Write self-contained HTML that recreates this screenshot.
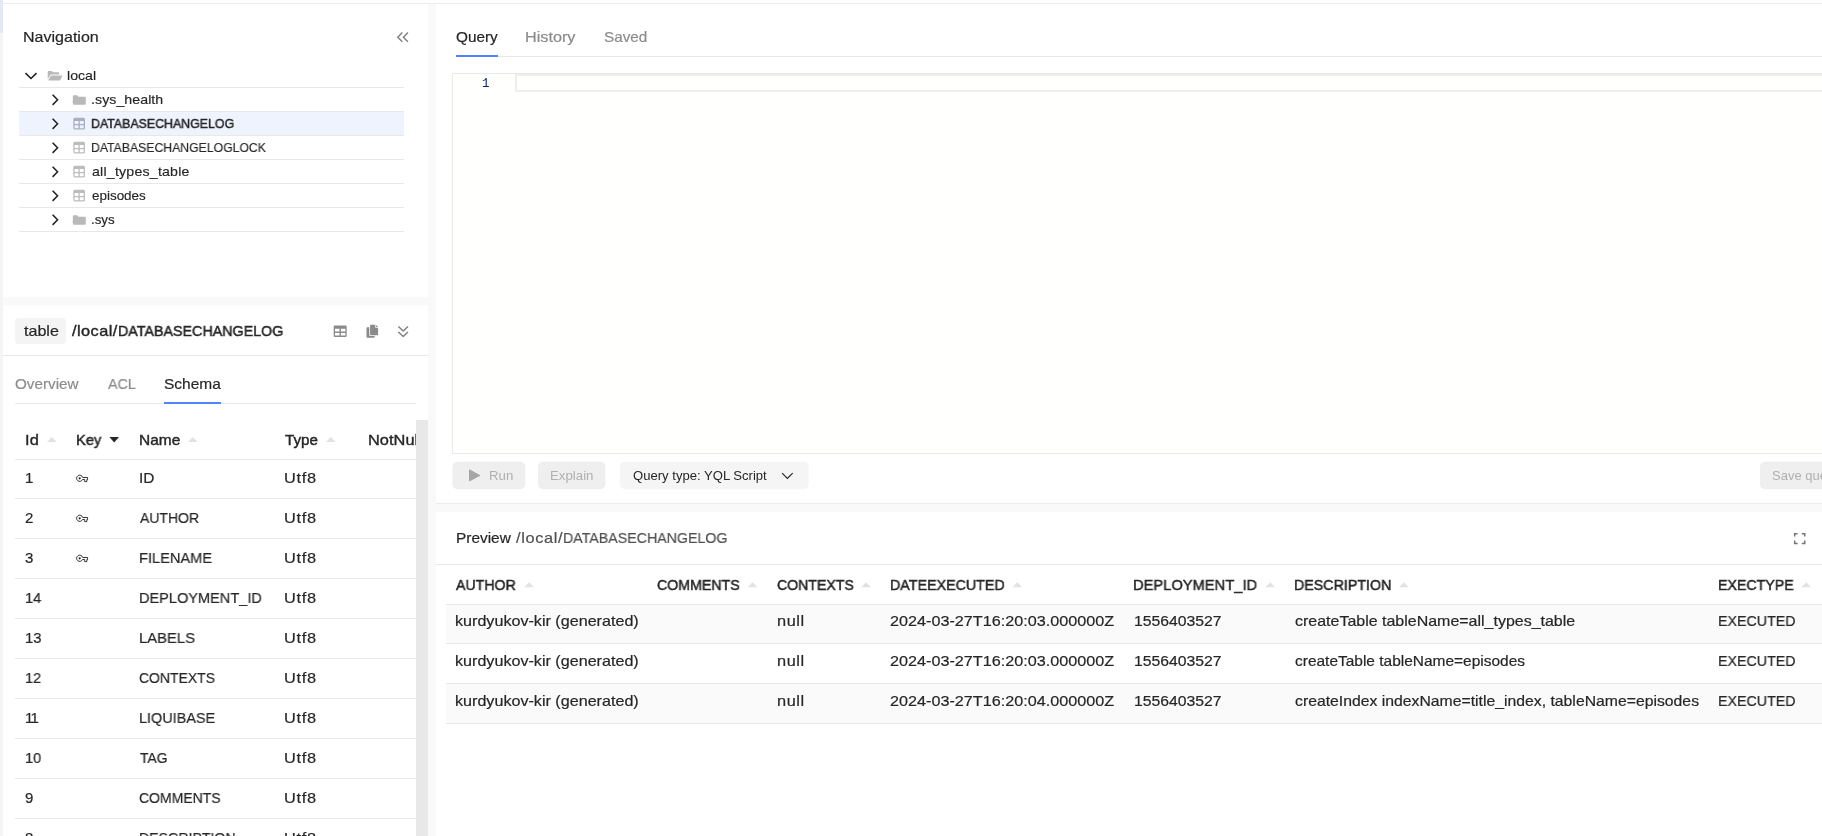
<!DOCTYPE html>
<html lang="en">
<head>
<meta charset="utf-8">
<title>YDB Embedded UI</title>
<style>
*{box-sizing:border-box;margin:0;padding:0}
html,body{width:1822px;height:836px;overflow:hidden;background:#fff}
body{position:relative;font-family:"Liberation Sans",sans-serif;font-size:13px;color:#262626}
.a{position:absolute}
.t{position:absolute;white-space:nowrap;line-height:1;color:#262626;transform-origin:0 0;will-change:transform}
svg{display:block;position:absolute;overflow:visible}
.hl{position:absolute;height:1px;background:#e8e8e8}
</style>
</head>
<body>
<div class="a" style="left:0;top:0;width:3px;height:33px;background:#e3e8f6"></div>
<div class="a" style="left:0;top:33px;width:3px;height:803px;background:#f4f4f4"></div>
<div class="hl" style="left:3px;top:3px;width:1819px;background:#ececec"></div>
<div class="a" style="left:428px;top:4px;width:8px;height:832px;background:#f9f9f9"></div>
<div class="a" style="left:3px;top:297px;width:425px;height:8px;background:#f9f9f9"></div>
<svg style="left:397px;top:32px" width="12" height="10" viewBox="0 0 12 10"><path d="M5.3 0.4L0.8 5.2L5.3 9.7M10.9 0.4L6.4 5.2L10.9 9.7" fill="none" stroke="#7f7f7f" stroke-width="1.4"/></svg>
<div class="a" style="left:19px;top:112px;width:385px;height:23px;background:#eff3fe"></div>
<div class="hl" style="left:19px;top:87px;width:385px"></div>
<div class="hl" style="left:19px;top:111px;width:385px"></div>
<div class="hl" style="left:19px;top:135px;width:385px"></div>
<div class="hl" style="left:19px;top:159px;width:385px"></div>
<div class="hl" style="left:19px;top:183px;width:385px"></div>
<div class="hl" style="left:19px;top:207px;width:385px"></div>
<div class="hl" style="left:19px;top:231px;width:385px"></div>
<svg style="left:25px;top:72px" width="12" height="7" viewBox="0 0 12 7"><g transform="translate(0.0 0.5)"><path d="M0.5 0.6L6 6L11.5 0.6" fill="none" stroke="#1f1f1f" stroke-width="1.5"/></g></svg>
<svg style="left:47px;top:70px" width="14.8" height="9.7" viewBox="0 0 14.8 9.7"><g transform="translate(0.7 0.9)"><path d="M0 1.1Q0 0 1.1 0H4L5.3 1.3H10.5Q11.6 1.3 11.6 2.4V3.6H3.7Q2.7 3.6 2.2 4.5L0 8.4Z" fill="#b9b9b9"/><path d="M3.9 4.6H14Q15 4.6 14.5 5.5L12.5 9Q12.1 9.7 11.3 9.7H1.2Q0.3 9.7 0.8 8.9L2.7 5.3Q3.1 4.6 3.9 4.6Z" fill="#b9b9b9"/></g></svg>
<svg style="left:52px;top:94px" width="7" height="12" viewBox="0 0 7 12"><g transform="translate(0.0 0.1)"><path d="M0.6 0.6 L5.6 5.7 L0.6 10.8" fill="none" stroke="#1f1f1f" stroke-width="1.5" stroke-linejoin="miter"/></g></svg>
<svg style="left:52px;top:118px" width="7" height="12" viewBox="0 0 7 12"><g transform="translate(0.0 0.1)"><path d="M0.6 0.6 L5.6 5.7 L0.6 10.8" fill="none" stroke="#1f1f1f" stroke-width="1.5" stroke-linejoin="miter"/></g></svg>
<svg style="left:52px;top:142px" width="7" height="12" viewBox="0 0 7 12"><g transform="translate(0.0 0.1)"><path d="M0.6 0.6 L5.6 5.7 L0.6 10.8" fill="none" stroke="#1f1f1f" stroke-width="1.5" stroke-linejoin="miter"/></g></svg>
<svg style="left:52px;top:166px" width="7" height="12" viewBox="0 0 7 12"><g transform="translate(0.0 0.1)"><path d="M0.6 0.6 L5.6 5.7 L0.6 10.8" fill="none" stroke="#1f1f1f" stroke-width="1.5" stroke-linejoin="miter"/></g></svg>
<svg style="left:52px;top:190px" width="7" height="12" viewBox="0 0 7 12"><g transform="translate(0.0 0.1)"><path d="M0.6 0.6 L5.6 5.7 L0.6 10.8" fill="none" stroke="#1f1f1f" stroke-width="1.5" stroke-linejoin="miter"/></g></svg>
<svg style="left:52px;top:214px" width="7" height="12" viewBox="0 0 7 12"><g transform="translate(0.0 0.1)"><path d="M0.6 0.6 L5.6 5.7 L0.6 10.8" fill="none" stroke="#1f1f1f" stroke-width="1.5" stroke-linejoin="miter"/></g></svg>
<svg style="left:72px;top:95px" width="13" height="10" viewBox="0 0 13 9.6"><g transform="translate(0.8 0.0)"><path d="M0 1.2Q0 0 1.2 0H4.3L5.7 1.5H11.8Q13 1.5 13 2.7V8.4Q13 9.6 11.8 9.6H1.2Q0 9.6 0 8.4Z" fill="#b9b9b9"/></g></svg>
<svg style="left:72px;top:215px" width="13" height="10" viewBox="0 0 13 9.6"><g transform="translate(0.8 0.0)"><path d="M0 1.2Q0 0 1.2 0H4.3L5.7 1.5H11.8Q13 1.5 13 2.7V8.4Q13 9.6 11.8 9.6H1.2Q0 9.6 0 8.4Z" fill="#b9b9b9"/></g></svg>
<svg style="left:73px;top:117px" width="11.7" height="11.7" viewBox="0 0 11.7 11.7"><g transform="translate(0.3 0.8)"><path fill-rule="evenodd" fill="#a9aec2" d="M1.6 0H10.1Q11.7 0 11.7 1.6V10.1Q11.7 11.7 10.1 11.7H1.6Q0 11.7 0 10.1V1.6Q0 0 1.6 0ZM1.3 3.1V6.2H5.2V3.1ZM6.5 3.1V6.2H10.4V3.1ZM1.3 7.4V10.4H5.2V7.4ZM6.5 7.4V10.4H10.4V7.4Z"/></g></svg>
<svg style="left:73px;top:141px" width="11.7" height="11.7" viewBox="0 0 11.7 11.7"><g transform="translate(0.3 0.8)"><path fill-rule="evenodd" fill="#bcbcbc" d="M1.6 0H10.1Q11.7 0 11.7 1.6V10.1Q11.7 11.7 10.1 11.7H1.6Q0 11.7 0 10.1V1.6Q0 0 1.6 0ZM1.3 3.1V6.2H5.2V3.1ZM6.5 3.1V6.2H10.4V3.1ZM1.3 7.4V10.4H5.2V7.4ZM6.5 7.4V10.4H10.4V7.4Z"/></g></svg>
<svg style="left:73px;top:165px" width="11.7" height="11.7" viewBox="0 0 11.7 11.7"><g transform="translate(0.3 0.8)"><path fill-rule="evenodd" fill="#bcbcbc" d="M1.6 0H10.1Q11.7 0 11.7 1.6V10.1Q11.7 11.7 10.1 11.7H1.6Q0 11.7 0 10.1V1.6Q0 0 1.6 0ZM1.3 3.1V6.2H5.2V3.1ZM6.5 3.1V6.2H10.4V3.1ZM1.3 7.4V10.4H5.2V7.4ZM6.5 7.4V10.4H10.4V7.4Z"/></g></svg>
<svg style="left:73px;top:189px" width="11.7" height="11.7" viewBox="0 0 11.7 11.7"><g transform="translate(0.3 0.8)"><path fill-rule="evenodd" fill="#bcbcbc" d="M1.6 0H10.1Q11.7 0 11.7 1.6V10.1Q11.7 11.7 10.1 11.7H1.6Q0 11.7 0 10.1V1.6Q0 0 1.6 0ZM1.3 3.1V6.2H5.2V3.1ZM6.5 3.1V6.2H10.4V3.1ZM1.3 7.4V10.4H5.2V7.4ZM6.5 7.4V10.4H10.4V7.4Z"/></g></svg>
<div class="a" style="left:15px;top:318px;width:51px;height:26px;border-radius:4px;background:#f4f4f4"></div>
<div class="hl" style="left:3px;top:355px;width:425px"></div>
<svg style="left:333px;top:325px" width="13" height="11.6" viewBox="0 0 13 11.6"><g transform="translate(0.7 0.4)"><path fill-rule="evenodd" fill="#8a8a8a" d="M1.3 0H11.7Q13 0 13 1.3V10.3Q13 11.6 11.7 11.6H1.3Q0 11.6 0 10.3V1.3Q0 0 1.3 0ZM1.3 3.4V6.1H5.8V3.4ZM7.2 3.4V6.1H11.7V3.4ZM1.3 7.5V10.2H5.8V7.5ZM7.2 7.5V10.2H11.7V7.5Z"/></g></svg>
<svg style="left:366px;top:324px" width="11.6" height="13" viewBox="0 0 11.6 13"><g transform="translate(0.5 0.8)"><path fill="#8a8a8a" d="M4.4 0H8.8V2.9H11.6V9.6Q11.6 10.4 10.8 10.4H4.4Q3.6 10.4 3.6 9.6V0.8Q3.6 0 4.4 0ZM9.6 0.1L11.5 2.1H9.6ZM2.8 2.4V10.2Q2.8 11.2 3.8 11.2H8.2V12.2Q8.2 13 7.4 13H0.8Q0 13 0 12.2V3.2Q0 2.4 0.8 2.4Z"/></g></svg>
<svg style="left:398px;top:326px" width="10.4" height="11.2" viewBox="0 0 10.4 11.2"><path d="M0.4 0.5L5.2 5.1L10 0.5M0.4 5.9L5.2 10.5L10 5.9" fill="none" stroke="#7f7f7f" stroke-width="1.4"/></svg>
<div class="hl" style="left:15px;top:403px;width:401px"></div>
<div class="a" style="left:164px;top:402px;width:57px;height:2px;background:#5282ff"></div>
<div class="hl" style="left:15px;top:459px;width:401px"></div>
<div class="hl" style="left:15px;top:498px;width:401px"></div>
<div class="hl" style="left:15px;top:538px;width:401px"></div>
<div class="hl" style="left:15px;top:578px;width:401px"></div>
<div class="hl" style="left:15px;top:618px;width:401px"></div>
<div class="hl" style="left:15px;top:658px;width:401px"></div>
<div class="hl" style="left:15px;top:698px;width:401px"></div>
<div class="hl" style="left:15px;top:738px;width:401px"></div>
<div class="hl" style="left:15px;top:778px;width:401px"></div>
<div class="hl" style="left:15px;top:818px;width:401px"></div>
<svg style="left:47px;top:437px" width="9.6" height="5" viewBox="0 0 9.6 5"><path d="M0 5L4.8 0L9.6 5Z" fill="#e2e2e2"/></svg>
<svg style="left:109px;top:437px" width="9.6" height="5.6" viewBox="0 0 9.6 5.6"><g transform="translate(0.4 0.0)"><path d="M0 0H9.6L4.8 5.6Z" fill="#262626"/></g></svg>
<svg style="left:188px;top:437px" width="9.6" height="5" viewBox="0 0 9.6 5"><path d="M0 5L4.8 0L9.6 5Z" fill="#e2e2e2"/></svg>
<svg style="left:326px;top:437px" width="9.6" height="5" viewBox="0 0 9.6 5"><path d="M0 5L4.8 0L9.6 5Z" fill="#e2e2e2"/></svg>
<svg style="left:76px;top:474px" width="12" height="7.4" viewBox="0 0 12 7.4"><g transform="translate(0.0 0.5)"><path d="M6.7 3H11.6V5H10.9V7.1H8.7V5H6.56A3.1 3.1 0 1 1 6.7 3Z" fill="none" stroke="#1f1f1f" stroke-width="0.9" stroke-linejoin="round"/><circle cx="3.7" cy="3.85" r="1.05" fill="#1f1f1f"/></g></svg>
<svg style="left:76px;top:514px" width="12" height="7.4" viewBox="0 0 12 7.4"><g transform="translate(0.0 0.5)"><path d="M6.7 3H11.6V5H10.9V7.1H8.7V5H6.56A3.1 3.1 0 1 1 6.7 3Z" fill="none" stroke="#1f1f1f" stroke-width="0.9" stroke-linejoin="round"/><circle cx="3.7" cy="3.85" r="1.05" fill="#1f1f1f"/></g></svg>
<svg style="left:76px;top:554px" width="12" height="7.4" viewBox="0 0 12 7.4"><g transform="translate(0.0 0.5)"><path d="M6.7 3H11.6V5H10.9V7.1H8.7V5H6.56A3.1 3.1 0 1 1 6.7 3Z" fill="none" stroke="#1f1f1f" stroke-width="0.9" stroke-linejoin="round"/><circle cx="3.7" cy="3.85" r="1.05" fill="#1f1f1f"/></g></svg>
<div class="hl" style="left:456px;top:56px;width:1366px"></div>
<div class="a" style="left:456px;top:55px;width:42px;height:2px;background:#5282ff"></div>
<div class="a" style="left:452px;top:73px;width:1380px;height:381px;border:1px solid #e9e9e9;background:#fffffe"></div>
<div class="a" style="left:515px;top:74px;width:1320px;height:18px;border:2px solid #eeeeee"></div>
<svg style="left:0;top:0" width="1822" height="836"><rect x="452.4" y="461.7" width="72.9" height="27.6" rx="5" fill="#efefef"/><rect x="538" y="461.7" width="67.4" height="27.6" rx="5" fill="#efefef"/><rect x="619.9" y="461.7" width="188.8" height="27.6" rx="5" fill="#f5f5f5"/><rect x="1760" y="461.7" width="100" height="27.6" rx="5" fill="#efefef"/></svg>
<svg style="left:469px;top:469px" width="11.2" height="12" viewBox="0 0 11.2 12"><g transform="translate(0.0 0.4)"><path d="M0 0.6Q0 -0.3 0.8 0.2L10.8 5.5Q11.6 6 10.8 6.5L0.8 11.8Q0 12.3 0 11.4Z" fill="#a6a6a6"/></g></svg>
<svg style="left:781px;top:472px" width="11.6" height="6.6" viewBox="0 0 11.6 6.6"><g transform="translate(0.6 0.6)"><path d="M0.5 0.5L5.8 5.8L11.1 0.5" fill="none" stroke="#262626" stroke-width="1.2"/></g></svg>
<div class="a" style="left:436px;top:503px;width:1386px;height:9px;background:#f9f9f9;border-top:1px solid #ebebeb"></div>
<div class="hl" style="left:436px;top:564px;width:1386px"></div>
<div class="a" style="left:446px;top:605px;width:1376px;height:38px;background:#fafafa"></div>
<div class="a" style="left:446px;top:684px;width:1376px;height:39px;background:#fafafa"></div>
<div class="hl" style="left:446px;top:604px;width:1376px"></div>
<div class="hl" style="left:446px;top:643px;width:1376px"></div>
<div class="hl" style="left:446px;top:683px;width:1376px"></div>
<div class="hl" style="left:446px;top:723px;width:1376px"></div>
<svg style="left:524px;top:582px" width="9.6" height="5" viewBox="0 0 9.6 5"><g transform="translate(0.3 0.2)"><path d="M0 5L4.8 0L9.6 5Z" fill="#e2e2e2"/></g></svg>
<svg style="left:747px;top:582px" width="9.6" height="5" viewBox="0 0 9.6 5"><g transform="translate(0.7 0.2)"><path d="M0 5L4.8 0L9.6 5Z" fill="#e2e2e2"/></g></svg>
<svg style="left:861px;top:582px" width="9.6" height="5" viewBox="0 0 9.6 5"><g transform="translate(0.3 0.2)"><path d="M0 5L4.8 0L9.6 5Z" fill="#e2e2e2"/></g></svg>
<svg style="left:1012px;top:582px" width="9.6" height="5" viewBox="0 0 9.6 5"><g transform="translate(0.5 0.2)"><path d="M0 5L4.8 0L9.6 5Z" fill="#e2e2e2"/></g></svg>
<svg style="left:1265px;top:582px" width="9.6" height="5" viewBox="0 0 9.6 5"><g transform="translate(0.5 0.2)"><path d="M0 5L4.8 0L9.6 5Z" fill="#e2e2e2"/></g></svg>
<svg style="left:1399px;top:582px" width="9.6" height="5" viewBox="0 0 9.6 5"><g transform="translate(0.0 0.2)"><path d="M0 5L4.8 0L9.6 5Z" fill="#e2e2e2"/></g></svg>
<svg style="left:1801px;top:582px" width="9.6" height="5" viewBox="0 0 9.6 5"><g transform="translate(0.5 0.2)"><path d="M0 5L4.8 0L9.6 5Z" fill="#e2e2e2"/></g></svg>
<svg style="left:1794px;top:533px" width="11.4" height="11.2" viewBox="0 0 11.4 11.2"><path d="M0.65 3.6V0.65H3.6M7.8 0.65H10.75V3.6M10.75 7.6V10.55H7.8M3.6 10.55H0.65V7.6" fill="none" stroke="#757575" stroke-width="1.5"/></svg>
<span class="t" style='left:22.6px;top:29px;font-size:15px;transform:scaleX(1.069);-webkit-text-stroke:0.2px'>Navigation</span>
<span class="t" style='left:66.9px;top:69px;font-size:13px;transform:scaleX(1.089);-webkit-text-stroke:0.15px'>local</span>
<span class="t" style='left:90.8px;top:93px;font-size:13px;transform:scaleX(1.090);letter-spacing:0.05px;-webkit-text-stroke:0.15px'>.sys_health</span>
<span class="t" style='left:90.9px;top:117px;font-size:13px;transform:scaleX(0.951);-webkit-text-stroke:0.49px'>DATABASECHANGELOG</span>
<span class="t" style='left:90.9px;top:141px;font-size:13px;transform:scaleX(0.941);-webkit-text-stroke:0.15px'>DATABASECHANGELOGLOCK</span>
<span class="t" style='left:91.5px;top:165px;font-size:13px;transform:scaleX(1.090);letter-spacing:0.19px;-webkit-text-stroke:0.15px'>all_types_table</span>
<span class="t" style='left:91.5px;top:189px;font-size:13px;transform:scaleX(1.033);-webkit-text-stroke:0.15px'>episodes</span>
<span class="t" style='left:90.9px;top:213px;font-size:13px;transform:scaleX(1.024);-webkit-text-stroke:0.15px'>.sys</span>
<span class="t" style='left:455.6px;top:29px;font-size:15px;transform:scaleX(1.021);-webkit-text-stroke:0.2px'>Query</span>
<span class="t" style='left:525.0px;top:29px;font-size:15px;transform:scaleX(1.081);-webkit-text-stroke:0.2px;color:#8c8c8c'>History</span>
<span class="t" style='left:604.0px;top:29px;font-size:15px;transform:scaleX(1.019);-webkit-text-stroke:0.2px;color:#8c8c8c'>Saved</span>
<span class="t" style='left:23.8px;top:323px;font-size:15px;transform:scaleX(1.071);-webkit-text-stroke:0.2px'>table</span>
<span class="t" style='left:72.0px;top:323px;font-size:15px;transform:scaleX(1.090);letter-spacing:0.39px;-webkit-text-stroke:0.37px'>/local/</span>
<span class="t" style='left:118.2px;top:323px;font-size:15px;transform:scaleX(0.952);-webkit-text-stroke:0.50px'>DATABASECHANGELOG</span>
<span class="t" style='left:15.2px;top:376px;font-size:15px;transform:scaleX(1.016);-webkit-text-stroke:0.2px;color:#8c8c8c'>Overview</span>
<span class="t" style='left:108.2px;top:376px;font-size:15px;transform:scaleX(0.955);-webkit-text-stroke:0.2px;color:#8c8c8c'>ACL</span>
<span class="t" style='left:163.5px;top:376px;font-size:15px;transform:scaleX(1.032);-webkit-text-stroke:0.2px'>Schema</span>
<span class="t" style='left:24.6px;top:432px;font-size:15px;transform:scaleX(1.090);letter-spacing:0.24px;-webkit-text-stroke:0.37px'>Id</span>
<span class="t" style='left:75.5px;top:432px;font-size:15px;transform:scaleX(0.981);-webkit-text-stroke:0.47px'>Key</span>
<span class="t" style='left:138.5px;top:432px;font-size:15px;transform:scaleX(1.031);-webkit-text-stroke:0.42px'>Name</span>
<span class="t" style='left:284.8px;top:432px;font-size:15px;transform:scaleX(1.010);-webkit-text-stroke:0.44px'>Type</span>
<span class="t" style='left:367.7px;top:432px;font-size:15px;transform:scaleX(1.090);letter-spacing:0.04px;-webkit-text-stroke:0.37px'>NotNull</span>
<span class="t" style='left:24.5px;top:470px;font-size:15px;-webkit-text-stroke:0.2px'>1</span>
<span class="t" style='left:138.5px;top:470px;font-size:15px;transform:scaleX(1.029);-webkit-text-stroke:0.2px'>ID</span>
<span class="t" style='left:284.0px;top:470px;font-size:15px;transform:scaleX(1.090);letter-spacing:0.67px;-webkit-text-stroke:0.2px'>Utf8</span>
<span class="t" style='left:24.7px;top:510px;font-size:15px;-webkit-text-stroke:0.2px'>2</span>
<span class="t" style='left:139.7px;top:510px;font-size:15px;transform:scaleX(0.933);-webkit-text-stroke:0.2px'>AUTHOR</span>
<span class="t" style='left:284.0px;top:510px;font-size:15px;transform:scaleX(1.090);letter-spacing:0.67px;-webkit-text-stroke:0.2px'>Utf8</span>
<span class="t" style='left:24.9px;top:550px;font-size:15px;-webkit-text-stroke:0.2px'>3</span>
<span class="t" style='left:138.6px;top:550px;font-size:15px;transform:scaleX(0.974);-webkit-text-stroke:0.2px'>FILENAME</span>
<span class="t" style='left:284.0px;top:550px;font-size:15px;transform:scaleX(1.090);letter-spacing:0.67px;-webkit-text-stroke:0.2px'>Utf8</span>
<span class="t" style='left:24.5px;top:590px;font-size:15px;transform:scaleX(0.976);-webkit-text-stroke:0.2px'>14</span>
<span class="t" style='left:138.6px;top:590px;font-size:15px;transform:scaleX(0.970);-webkit-text-stroke:0.2px'>DEPLOYMENT_ID</span>
<span class="t" style='left:284.0px;top:590px;font-size:15px;transform:scaleX(1.090);letter-spacing:0.67px;-webkit-text-stroke:0.2px'>Utf8</span>
<span class="t" style='left:24.5px;top:630px;font-size:15px;transform:scaleX(0.991);-webkit-text-stroke:0.2px'>13</span>
<span class="t" style='left:138.5px;top:630px;font-size:15px;transform:scaleX(0.989);-webkit-text-stroke:0.2px'>LABELS</span>
<span class="t" style='left:284.0px;top:630px;font-size:15px;transform:scaleX(1.090);letter-spacing:0.67px;-webkit-text-stroke:0.2px'>Utf8</span>
<span class="t" style='left:24.5px;top:670px;font-size:15px;transform:scaleX(0.971);-webkit-text-stroke:0.2px'>12</span>
<span class="t" style='left:139.0px;top:670px;font-size:15px;transform:scaleX(0.930);-webkit-text-stroke:0.2px'>CONTEXTS</span>
<span class="t" style='left:284.0px;top:670px;font-size:15px;transform:scaleX(1.090);letter-spacing:0.67px;-webkit-text-stroke:0.2px'>Utf8</span>
<span class="t" style='left:24.5px;top:710px;font-size:15px;letter-spacing:-1.73px;-webkit-text-stroke:0.2px'>11</span>
<span class="t" style='left:138.6px;top:710px;font-size:15px;transform:scaleX(0.961);-webkit-text-stroke:0.2px'>LIQUIBASE</span>
<span class="t" style='left:284.0px;top:710px;font-size:15px;transform:scaleX(1.090);letter-spacing:0.67px;-webkit-text-stroke:0.2px'>Utf8</span>
<span class="t" style='left:24.5px;top:750px;font-size:15px;transform:scaleX(0.976);-webkit-text-stroke:0.2px'>10</span>
<span class="t" style='left:139.5px;top:750px;font-size:15px;transform:scaleX(0.927);-webkit-text-stroke:0.2px'>TAG</span>
<span class="t" style='left:284.0px;top:750px;font-size:15px;transform:scaleX(1.090);letter-spacing:0.67px;-webkit-text-stroke:0.2px'>Utf8</span>
<span class="t" style='left:24.7px;top:790px;font-size:15px;-webkit-text-stroke:0.2px'>9</span>
<span class="t" style='left:139.0px;top:790px;font-size:15px;transform:scaleX(0.933);-webkit-text-stroke:0.2px'>COMMENTS</span>
<span class="t" style='left:284.0px;top:790px;font-size:15px;transform:scaleX(1.090);letter-spacing:0.67px;-webkit-text-stroke:0.2px'>Utf8</span>
<span class="t" style='left:24.9px;top:830px;font-size:15px;-webkit-text-stroke:0.2px'>8</span>
<span class="t" style='left:138.6px;top:830px;font-size:15px;transform:scaleX(0.942);-webkit-text-stroke:0.2px'>DESCRIPTION</span>
<span class="t" style='left:284.0px;top:830px;font-size:15px;transform:scaleX(1.090);letter-spacing:0.67px;-webkit-text-stroke:0.2px'>Utf8</span>
<span class="t" style='left:488.7px;top:469px;font-size:13px;transform:scaleX(1.018);color:#b0b0b0'>Run</span>
<span class="t" style='left:549.8px;top:469px;font-size:13px;transform:scaleX(1.020);color:#b0b0b0'>Explain</span>
<span class="t" style='left:632.8px;top:469px;font-size:13px;transform:scaleX(1.006)'>Query type: YQL Script</span>
<span class="t" style='left:1772.1px;top:469px;font-size:13px;color:#b0b0b0'>Save query</span>
<span class="t" style='left:455.5px;top:530px;font-size:15px;transform:scaleX(1.027);-webkit-text-stroke:0.2px'>Preview</span>
<span class="t" style='left:516.0px;top:530px;font-size:15px;transform:scaleX(1.090);letter-spacing:0.59px;-webkit-text-stroke:0.2px;color:#505050'>/local/</span>
<span class="t" style='left:563.1px;top:530px;font-size:15px;transform:scaleX(0.947);-webkit-text-stroke:0.2px;color:#505050'>DATABASECHANGELOG</span>
<span class="t" style='left:456.1px;top:577px;font-size:15px;transform:scaleX(0.944);-webkit-text-stroke:0.50px'>AUTHOR</span>
<span class="t" style='left:657.3px;top:577px;font-size:15px;transform:scaleX(0.945);-webkit-text-stroke:0.50px'>COMMENTS</span>
<span class="t" style='left:776.8px;top:577px;font-size:15px;transform:scaleX(0.940);-webkit-text-stroke:0.51px'>CONTEXTS</span>
<span class="t" style='left:889.9px;top:577px;font-size:15px;transform:scaleX(0.951);-webkit-text-stroke:0.50px'>DATEEXECUTED</span>
<span class="t" style='left:1133.4px;top:577px;font-size:15px;transform:scaleX(0.980);-webkit-text-stroke:0.47px'>DEPLOYMENT_ID</span>
<span class="t" style='left:1293.9px;top:577px;font-size:15px;transform:scaleX(0.949);-webkit-text-stroke:0.50px'>DESCRIPTION</span>
<span class="t" style='left:1717.9px;top:577px;font-size:15px;transform:scaleX(0.946);-webkit-text-stroke:0.50px'>EXECTYPE</span>
<span class="t" style='left:455.1px;top:613px;font-size:15px;transform:scaleX(1.075);-webkit-text-stroke:0.2px'>kurdyukov-kir (generated)</span>
<span class="t" style='left:776.5px;top:613px;font-size:15px;transform:scaleX(1.090);letter-spacing:0.50px;-webkit-text-stroke:0.2px'>null</span>
<span class="t" style='left:890.2px;top:613px;font-size:15px;transform:scaleX(1.079);-webkit-text-stroke:0.2px'>2024-03-27T16:20:03.000000Z</span>
<span class="t" style='left:1134.0px;top:613px;font-size:15px;transform:scaleX(1.050);-webkit-text-stroke:0.2px'>1556403527</span>
<span class="t" style='left:1294.5px;top:613px;font-size:15px;transform:scaleX(1.065);-webkit-text-stroke:0.2px'>createTable tableName=all_types_table</span>
<span class="t" style='left:1717.9px;top:613px;font-size:15px;transform:scaleX(0.950);-webkit-text-stroke:0.2px'>EXECUTED</span>
<span class="t" style='left:455.1px;top:653px;font-size:15px;transform:scaleX(1.075);-webkit-text-stroke:0.2px'>kurdyukov-kir (generated)</span>
<span class="t" style='left:776.5px;top:653px;font-size:15px;transform:scaleX(1.090);letter-spacing:0.50px;-webkit-text-stroke:0.2px'>null</span>
<span class="t" style='left:890.2px;top:653px;font-size:15px;transform:scaleX(1.079);-webkit-text-stroke:0.2px'>2024-03-27T16:20:03.000000Z</span>
<span class="t" style='left:1134.0px;top:653px;font-size:15px;transform:scaleX(1.050);-webkit-text-stroke:0.2px'>1556403527</span>
<span class="t" style='left:1294.5px;top:653px;font-size:15px;transform:scaleX(1.031);-webkit-text-stroke:0.2px'>createTable tableName=episodes</span>
<span class="t" style='left:1717.9px;top:653px;font-size:15px;transform:scaleX(0.950);-webkit-text-stroke:0.2px'>EXECUTED</span>
<span class="t" style='left:455.1px;top:693px;font-size:15px;transform:scaleX(1.075);-webkit-text-stroke:0.2px'>kurdyukov-kir (generated)</span>
<span class="t" style='left:776.5px;top:693px;font-size:15px;transform:scaleX(1.090);letter-spacing:0.50px;-webkit-text-stroke:0.2px'>null</span>
<span class="t" style='left:890.2px;top:693px;font-size:15px;transform:scaleX(1.079);-webkit-text-stroke:0.2px'>2024-03-27T16:20:04.000000Z</span>
<span class="t" style='left:1134.0px;top:693px;font-size:15px;transform:scaleX(1.050);-webkit-text-stroke:0.2px'>1556403527</span>
<span class="t" style='left:1294.5px;top:693px;font-size:15px;transform:scaleX(1.051);-webkit-text-stroke:0.2px'>createIndex indexName=title_index, tableName=episodes</span>
<span class="t" style='left:1717.9px;top:693px;font-size:15px;transform:scaleX(0.950);-webkit-text-stroke:0.2px'>EXECUTED</span>
<span class="t" style='left:482.0px;top:78px;font-size:12.5px;color:#0b216f;font-family:"Liberation Mono", monospace'>1</span>
<div class="a" style="left:416px;top:405px;width:12px;height:431px;background:#fff"></div>
<div class="a" style="left:416px;top:420px;width:12px;height:416px;background:#e8e8e8"></div>

</body>
</html>
